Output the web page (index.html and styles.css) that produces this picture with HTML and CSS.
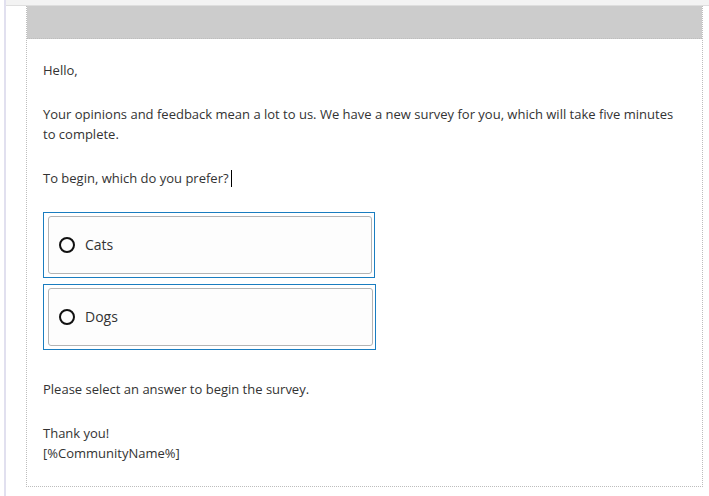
FILE: index.html
```html
<!DOCTYPE html>
<html>
<head>
<meta charset="utf-8">
<link rel="stylesheet" href="styles.css">
</head>
<body>
<div class="page">
  <div class="rail"></div>
  <div class="main">
    <div class="topbar"></div>
    <div class="email">
      <div class="email-header"></div>
      <div class="email-body">
        <p>Hello,</p>
        <p>Your opinions and feedback mean a lot to us. We have a new survey for you, which will take five minutes to complete.</p>
        <p>To begin, which do you prefer?<span class="caret"></span></p>
        <div class="options">
          <div class="option">
            <div class="option-inner"><span class="radio"></span><span class="label">Cats</span></div>
          </div>
          <div class="option option-wide">
            <div class="option-inner"><span class="radio"></span><span class="label">Dogs</span></div>
          </div>
        </div>
        <p>Please select an answer to begin the survey.</p>
        <p class="signoff">Thank you!<br>[%CommunityName%]</p>
      </div>
    </div>
  </div>
</div>
</body>
</html>
```
FILE: styles.css
```css
html, body {
  margin: 0;
  padding: 0;
  background: #ffffff;
}
body {
  font-family: "Open Sans", "Noto Sans", sans-serif;
  font-size: 13px;
  line-height: 20px;
  color: #333333;
  height: 496px;
  overflow: hidden;
}
.page {
  display: flex;
  height: 496px;
}
.rail {
  width: 2px;
  margin-left: 4px;
  background: #e1e0ef;
  flex: none;
}
.main {
  flex: 1;
  display: flex;
  flex-direction: column;
}
.topbar {
  height: 5px;
  background: #f3f3f3;
  border-bottom: 1px solid #dedede;
}
.email {
  margin-left: 20px;
  width: 675px;
  border-left: 1px dotted #bdbdbd;
  border-right: 1px dotted #bdbdbd;
  border-bottom: 1px dotted #bdbdbd;
}
.email-header {
  height: 32px;
  background: #cccccc;
  border-bottom: 1px dotted #bdbdbd;
}
.email-body {
  padding: 21px 16px 23px 16px;
}
.email-body p {
  margin: 0 0 24px 0;
}
.email-body p.signoff {
  margin-bottom: 0;
}
.caret {
  display: inline-block;
  width: 0;
  height: 17px;
  border-left: 1px solid #000;
  margin-left: 2px;
  vertical-align: -4px;
}
.options {
  display: flex;
  flex-direction: column;
  gap: 6px;
  margin-bottom: 29px;
}
.option {
  width: 331px;
  border: 1px solid #1a7dc0;
  padding: 3px 2px 3px 4px;
  box-sizing: border-box;
  width: 332px;
}
.option-wide {
  width: 333px;
}
.option-inner {
  height: 58px;
  box-sizing: border-box;
  border: 1px solid #b4b4b4;
  border-radius: 3px;
  background: #fdfdfd;
  display: flex;
  align-items: center;
  padding-left: 10px;
}
.radio {
  width: 16px;
  height: 16px;
  box-sizing: border-box;
  border: 2px solid #111;
  border-radius: 50%;
  flex: none;
}
.label {
  margin-left: 10px;
  font-size: 14px;
}
```
